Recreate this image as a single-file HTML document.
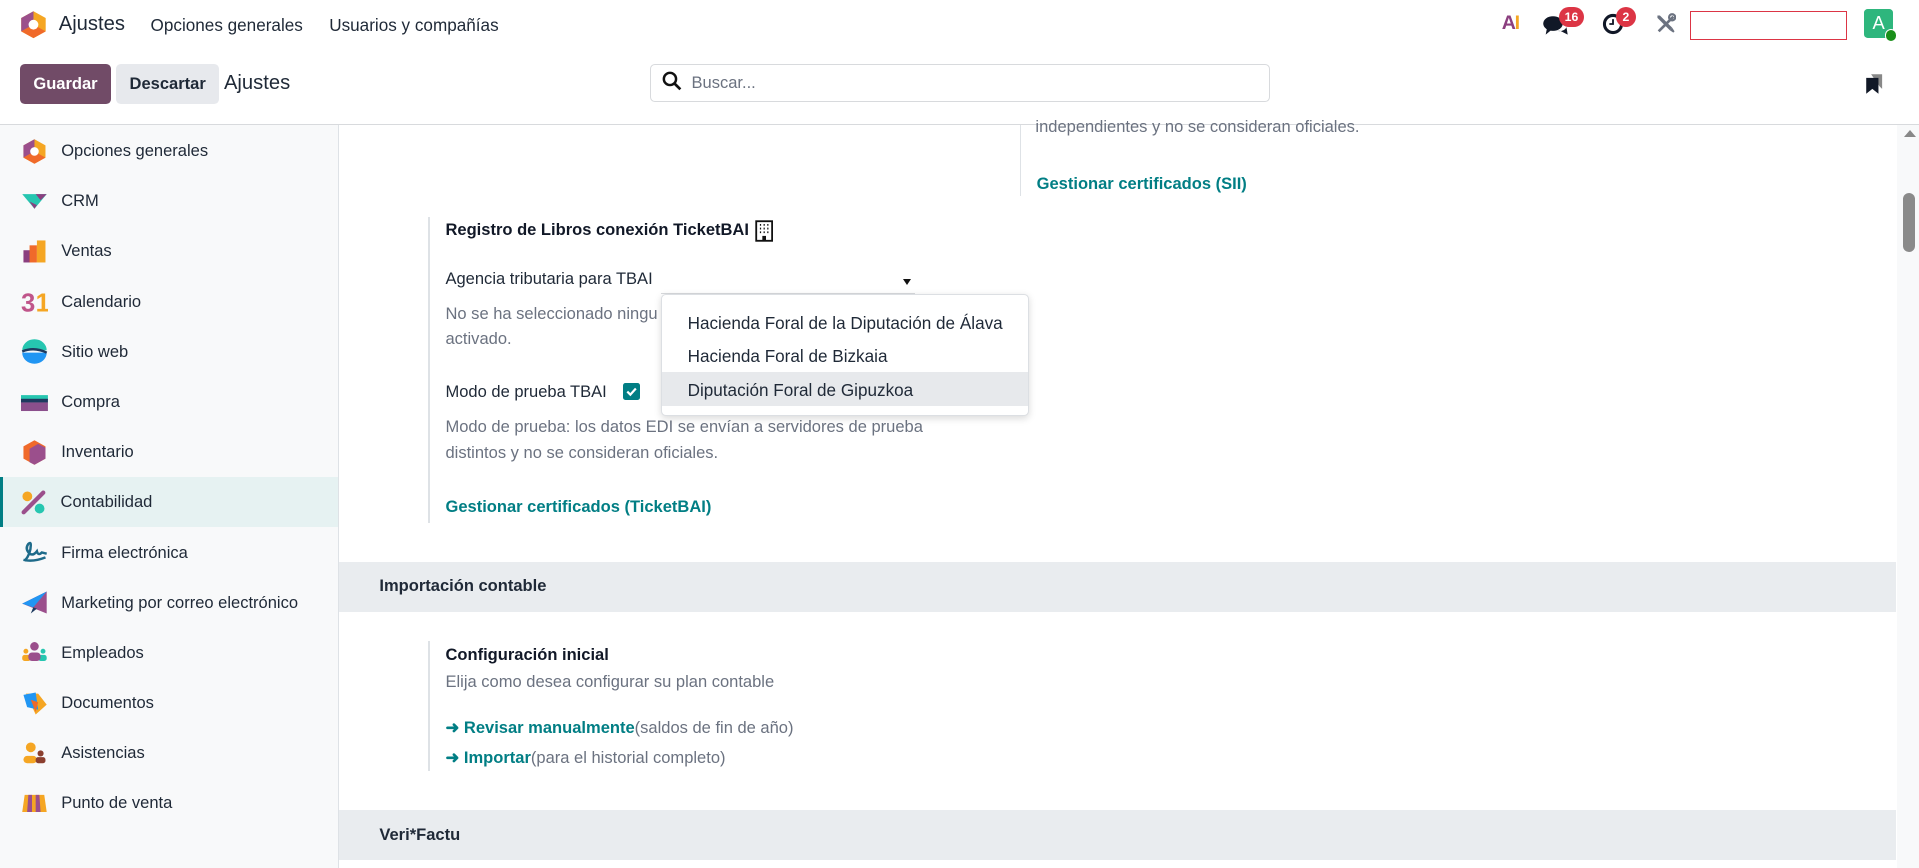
<!DOCTYPE html>
<html><head><meta charset="utf-8">
<style>
html{zoom:1.2239}
*{box-sizing:border-box;margin:0;padding:0}
body{width:1568px;height:709px;overflow:hidden;font-family:"Liberation Sans",sans-serif;color:#374151;font-size:13.5px;background:#fff;position:relative}
.abs{position:absolute}
.t{position:absolute;white-space:nowrap}
.btn{position:absolute;border-radius:4px;font-weight:bold;font-size:13.5px;display:flex;align-items:center;justify-content:center}
.side{position:absolute;left:0;top:102px;width:277px;height:607px;background:#f8f9fa;border-right:1px solid #dee2e6}
.item{position:absolute;left:0;width:276px;height:41px;display:flex;align-items:center}
.item .ic{position:absolute;left:17px;width:22px;height:22px}
.item span{position:absolute;left:50px;font-size:13.5px;color:#1f2937}
.gray{color:#6b7280}
.teal{color:#017e84;font-weight:bold}
.band{position:absolute;left:277px;width:1272px;height:41px;background:#e9ecef}
.vl{position:absolute;width:1px;background:#dee2e6}
.badge{position:absolute;background:#dc3545;color:#fff;font-size:10px;font-weight:bold;border-radius:9px;height:16px;display:flex;align-items:center;justify-content:center}
</style></head><body>
<svg class="abs" style="left:16px;top:8px" width="22" height="24" viewBox="0 0 22 24"><polygon points="11,1 21,6.5 21,17.5 11,23 1,17.5 1,6.5" fill="#f5a623"/><polygon points="11,1 1,6.5 1,17.5 11,12" fill="#9b4f8c"/><polygon points="1,17.5 11,23 21,17.5 11,12" fill="#f06a2a"/><circle cx="11" cy="12" r="4" fill="#fff"/></svg>
<div class="t" style="left:48px;top:11px;font-size:16.5px;color:#1f2937">Ajustes</div>
<div class="t" style="left:123px;top:12px;font-size:14px;color:#1f2937">Opciones generales</div>
<div class="t" style="left:269px;top:12px;font-size:14px;color:#1f2937">Usuarios y compañías</div>
<div class="t" style="left:1227px;top:10px;font-size:16px;font-weight:bold;letter-spacing:-1px"><span style="color:#8b3f7f">A</span><span style="color:#f5a623">I</span></div>
<svg class="abs" style="left:1260px;top:12px" width="22" height="18" viewBox="0 0 22 18"><ellipse cx="9" cy="7" rx="8" ry="6" fill="#111827"/><path d="M4 11 L3 16 L8 12Z" fill="#111827"/><path d="M12 13 Q18 14 20 10 L21 16 L15 13Z" fill="#111827"/></svg>
<div class="badge" style="left:1274px;top:6px;width:20px">16</div>
<svg class="abs" style="left:1309px;top:11px" width="18" height="18" viewBox="0 0 18 18"><circle cx="9" cy="9" r="7" fill="none" stroke="#111827" stroke-width="2.5"/><path d="M9 5V9H6" stroke="#111827" stroke-width="1.5" fill="none"/></svg>
<div class="badge" style="left:1320px;top:6px;width:17px">2</div>
<svg class="abs" style="left:1352px;top:11px" width="17" height="17" viewBox="0 0 17 17"><path d="M3 15L15 3" stroke="#6b7280" stroke-width="2.2"/><circle cx="14" cy="3.5" r="2.5" fill="none" stroke="#6b7280" stroke-width="1.8"/><path d="M2 2L4 2L14 12L12 14L2 4Z" fill="#6b7280"/><path d="M12 14L14 12L16 15L15 16Z" fill="#6b7280"/></svg>
<div class="abs" style="left:1381px;top:9px;width:128px;height:24px;border:1px solid #dc3545"></div>
<div class="abs" style="left:1523px;top:7px;width:24px;height:24px;background:#2eb67d;border-radius:3px;color:#fff;font-size:15px;display:flex;align-items:center;justify-content:center">A</div>
<div class="abs" style="left:1540px;top:24px;width:10px;height:10px;background:#1a8f1a;border-radius:50%;border:1px solid #fff"></div>
<div class="btn" style="left:16px;top:52px;width:75px;height:33px;background:#714b67;color:#fff">Guardar</div>
<div class="btn" style="left:95px;top:52px;width:84px;height:33px;background:#e7e9ed;color:#1f2937">Descartar</div>
<div class="t" style="left:183px;top:59px;font-size:16.5px;color:#1f2937">Ajustes</div>
<div class="abs" style="left:531px;top:52px;width:507px;height:31px;border:1px solid #d8dadd;border-radius:4px"></div>
<svg class="abs" style="left:541px;top:58px" width="16" height="16" viewBox="0 0 16 16"><circle cx="6.5" cy="6.5" r="5" fill="none" stroke="#111" stroke-width="2"/><path d="M10 10L15 15" stroke="#111" stroke-width="2.2"/></svg>
<div class="t gray" style="left:565px;top:60px">Buscar...</div>
<svg class="abs" style="left:1524px;top:60px" width="15" height="18" viewBox="0 0 15 18"><path d="M5 1H14V13L12 11" fill="#888"/><path d="M1 4H11V17L6 13L1 17Z" fill="#111827"/></svg>
<div class="abs" style="left:0;top:101px;width:1568px;height:1px;background:#d8dadd"></div>
<div class="side">
<div class="item" style="top:1px"><svg class="ic" viewBox="0 0 22 22"><polygon points="11,1 20,6 20,16 11,21 2,16 2,6" fill="#f5a623"/><polygon points="11,1 2,6 2,16 11,11" fill="#9b4f8c"/><polygon points="2,16 11,21 20,16 11,11" fill="#f06a2a"/><circle cx="11" cy="11" r="3.5" fill="#fff"/></svg><span>Opciones generales</span></div>
<div class="item" style="top:42px"><svg class="ic" viewBox="0 0 22 22"><path d="M1 5H21L11 17Z" fill="#26c6b0"/><path d="M12 5H21L16 10Z" fill="#8b3f7f"/><path d="M7 11L11 17L13 14Z" fill="#8b3f7f"/></svg><span>CRM</span></div>
<div class="item" style="top:83px"><svg class="ic" viewBox="0 0 22 22"><rect x="2" y="10" width="6" height="10" fill="#8b3f7f"/><rect x="7" y="6" width="6" height="14" fill="#f06a2a"/><rect x="13" y="2" width="7" height="18" fill="#f5a623"/></svg><span>Ventas</span></div>
<div class="item" style="top:124px"><svg class="ic" viewBox="0 0 22 22"><text x="0" y="19" font-family="Liberation Sans" font-weight="bold" font-size="21" fill="#c0558a">3</text><text x="12" y="19" font-family="Liberation Sans" font-weight="bold" font-size="21" fill="#f5a623">1</text></svg><span>Calendario</span></div>
<div class="item" style="top:165px"><svg class="ic" viewBox="0 0 22 22"><path d="M1 10A10 9 0 0 1 21 10Z" fill="#26c6b0"/><path d="M1 12A10 9 0 0 0 21 12Z" fill="#2196f3"/><path d="M1 11Q11 7 21 12" stroke="#1e3a5f" stroke-width="2" fill="none"/></svg><span>Sitio web</span></div>
<div class="item" style="top:206px"><svg class="ic" viewBox="0 0 22 22"><rect x="0" y="5" width="22" height="4" fill="#26c6b0"/><rect x="0" y="8" width="22" height="3" fill="#1e3a5f"/><rect x="0" y="11" width="22" height="7" fill="#8b4f8c"/></svg><span>Compra</span></div>
<div class="item" style="top:247px"><svg class="ic" viewBox="0 0 22 22"><polygon points="11,1 20,6 20,16 11,21 2,16 2,6" fill="#f06a2a"/><polygon points="14,4 20,7 20,16 11,21 7,19 7,8" fill="#9b4f8c"/></svg><span>Inventario</span></div>
<div class="item" style="top:288px;background:#e6f2f2;border-left:3px solid #017e84"><svg class="ic" viewBox="0 0 22 22" style="left:14px"><circle cx="6" cy="6" r="4" fill="#f5a623"/><circle cx="16" cy="16" r="4" fill="#26c6b0"/><path d="M3 19L19 3" stroke="#9b4f8c" stroke-width="3.5" stroke-linecap="round"/></svg><span style="left:47px">Contabilidad</span></div>
<div class="item" style="top:329px"><svg class="ic" viewBox="0 0 22 22"><path d="M3 18Q8 12 8 5Q8 2 6 4Q3 8 7 12Q10 14 13 10Q14 14 17 11L21 12M2 17Q10 19 20 15" stroke="#1e6b8a" stroke-width="2" fill="none"/></svg><span>Firma electrónica</span></div>
<div class="item" style="top:370px"><svg class="ic" viewBox="0 0 22 22"><path d="M1 12L21 2L21 20Z" fill="#9b4f8c"/><path d="M1 12L21 2L10 15Z" fill="#2196f3"/><path d="M10 15L8 20L13 16Z" fill="#1e3a5f"/></svg><span>Marketing por correo electrónico</span></div>
<div class="item" style="top:411px"><svg class="ic" viewBox="0 0 22 22"><circle cx="11" cy="6" r="3.5" fill="#9b4f8c"/><circle cx="4" cy="10" r="2" fill="#f5a623"/><circle cx="18" cy="10" r="2" fill="#26c6b0"/><rect x="1" y="13" width="7" height="5" rx="2" fill="#f5a623"/><rect x="14" y="13" width="7" height="5" rx="2" fill="#26c6b0"/><rect x="6" y="11" width="10" height="7" rx="3" fill="#9b4f8c"/></svg><span>Empleados</span></div>
<div class="item" style="top:452px"><svg class="ic" viewBox="0 0 22 22"><path d="M4 3L14 3L21 12L12 20Z" fill="#f5a623"/><path d="M2 4L12 2L14 16L5 14Z" fill="#2196f3"/><path d="M8 8L14 10L12 18Z" fill="#f06a2a"/></svg><span>Documentos</span></div>
<div class="item" style="top:493px"><svg class="ic" viewBox="0 0 22 22"><circle cx="8" cy="6" r="4" fill="#f5a623"/><circle cx="16" cy="11" r="2.5" fill="#8b3f2f"/><rect x="2" y="13" width="11" height="6" rx="3" fill="#f5a623"/><rect x="12" y="14" width="8" height="5" rx="2" fill="#8b3f2f"/></svg><span>Asistencias</span></div>
<div class="item" style="top:534px"><svg class="ic" viewBox="0 0 22 22"><path d="M1 18L3 4H19L21 18Z" fill="#f5a623"/><path d="M6 4H9V18H5ZM12 4H15L16 18H12Z" fill="#9b4f8c"/></svg><span>Punto de venta</span></div>
</div>
<div class="abs" style="left:1550px;top:102px;width:18px;height:607px;background:#f8f9fa"></div>
<div class="abs" style="left:1556px;top:106px;width:0;height:0;border-left:5px solid transparent;border-right:5px solid transparent;border-bottom:6px solid #888"></div>
<div class="abs" style="left:1555px;top:158px;width:10px;height:48px;background:#8a8a8a;border-radius:5px"></div>
<div class="vl" style="left:833px;top:102px;height:58px"></div>
<div class="t gray" style="left:846px;top:96px">independientes y no se consideran oficiales.</div>
<div class="t teal" style="left:847px;top:142px">Gestionar certificados (SII)</div>
<div class="vl" style="left:350px;top:177px;height:250px"></div>
<div class="t" style="left:364px;top:180px;font-weight:bold;color:#111827">Registro de Libros conexión TicketBAI</div>
<svg class="abs" style="left:617px;top:180px" width="15" height="18" viewBox="0 0 15 18"><rect x="1" y="1" width="13" height="16" fill="none" stroke="#111" stroke-width="1.5"/><path d="M4 4h1M7 4h1M10 4h1M4 7h1M7 7h1M10 7h1M4 10h1M7 10h1M10 10h1" stroke="#111" stroke-width="1.5"/><rect x="6" y="13" width="3" height="4" fill="#111"/></svg>
<div class="t" style="left:364px;top:220px;color:#1f2937">Agencia tributaria para TBAI</div>
<div class="abs" style="left:540px;top:239px;width:208px;height:1px;background:#d8dadd"></div>
<div class="abs" style="left:738px;top:228px;border-left:4px solid transparent;border-right:4px solid transparent;border-top:5px solid #111"></div>
<div class="t gray" style="left:364px;top:248px">No se ha seleccionado ningu</div>
<div class="t gray" style="left:364px;top:269px">activado.</div>
<div class="t" style="left:364px;top:312px;color:#1f2937">Modo de prueba TBAI</div>
<div class="abs" style="left:509px;top:313px;width:14px;height:14px;background:#017e84;border-radius:2px"></div>
<svg class="abs" style="left:509px;top:313px" width="14" height="14" viewBox="0 0 14 14"><path d="M3.5 7L6 9.5L10.5 4.5" stroke="#fff" stroke-width="1.8" fill="none"/></svg>
<div class="t gray" style="left:364px;top:341px">Modo de prueba: los datos EDI se envían a servidores de prueba</div>
<div class="t gray" style="left:364px;top:362px">distintos y no se consideran oficiales.</div>
<div class="t teal" style="left:364px;top:406px">Gestionar certificados (TicketBAI)</div>
<div class="abs" style="left:540px;top:240px;width:301px;height:100px;background:#fff;border:1px solid #dcdfe3;border-radius:4px;box-shadow:0 2px 6px rgba(0,0,0,.15)">
<div class="abs" style="left:0;top:63px;width:299px;height:28px;background:#e7e9ec"></div>
<div class="t" style="left:21px;top:15px;color:#1f2937;font-size:14px">Hacienda Foral de la Diputación de Álava</div>
<div class="t" style="left:21px;top:42px;color:#1f2937;font-size:14px">Hacienda Foral de Bizkaia</div>
<div class="t" style="left:21px;top:70px;color:#1f2937;font-size:14px">Diputación Foral de Gipuzkoa</div>
</div>
<div class="band" style="top:459px"><div class="t" style="left:33px;top:12px;font-weight:bold;color:#1f2937">Importación contable</div></div>
<div class="vl" style="left:350px;top:524px;height:106px"></div>
<div class="t" style="left:364px;top:527px;font-weight:bold;color:#111827">Configuración inicial</div>
<div class="t gray" style="left:364px;top:549px">Elija como desea configurar su plan contable</div>
<div class="t" style="left:364px;top:587px"><span class="teal">➜ Revisar manualmente</span><span class="gray">(saldos de fin de año)</span></div>
<div class="t" style="left:364px;top:611px"><span class="teal">➜ Importar</span><span class="gray">(para el historial completo)</span></div>
<div class="band" style="top:662px"><div class="t" style="left:33px;top:12px;font-weight:bold;color:#1f2937">Veri*Factu</div></div>
</body></html>
